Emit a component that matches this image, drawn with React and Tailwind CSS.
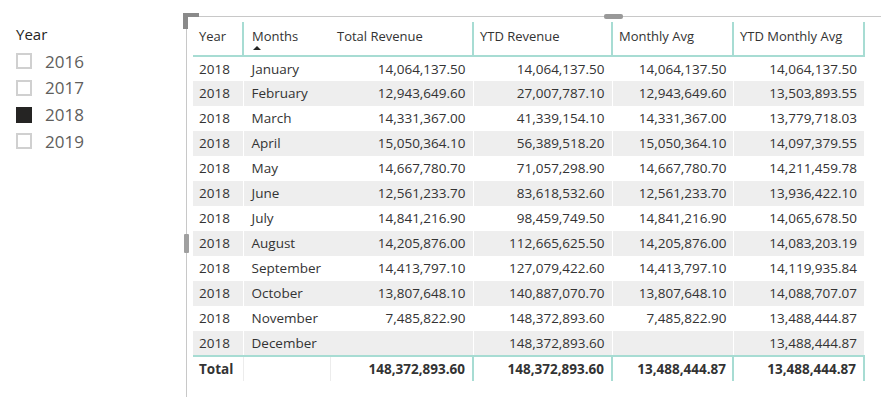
import React from "react";

const rows = [
  ["January", "14,064,137.50", "14,064,137.50", "14,064,137.50", "14,064,137.50"],
  ["February", "12,943,649.60", "27,007,787.10", "12,943,649.60", "13,503,893.55"],
  ["March", "14,331,367.00", "41,339,154.10", "14,331,367.00", "13,779,718.03"],
  ["April", "15,050,364.10", "56,389,518.20", "15,050,364.10", "14,097,379.55"],
  ["May", "14,667,780.70", "71,057,298.90", "14,667,780.70", "14,211,459.78"],
  ["June", "12,561,233.70", "83,618,532.60", "12,561,233.70", "13,936,422.10"],
  ["July", "14,841,216.90", "98,459,749.50", "14,841,216.90", "14,065,678.50"],
  ["August", "14,205,876.00", "112,665,625.50", "14,205,876.00", "14,083,203.19"],
  ["September", "14,413,797.10", "127,079,422.60", "14,413,797.10", "14,119,935.84"],
  ["October", "13,807,648.10", "140,887,070.70", "13,807,648.10", "14,088,707.07"],
  ["November", "7,485,822.90", "148,372,893.60", "7,485,822.90", "13,488,444.87"],
  ["December", "", "148,372,893.60", "", "13,488,444.87"],
];

const years = [
  { year: "2016", checked: false },
  { year: "2017", checked: false },
  { year: "2018", checked: true },
  { year: "2019", checked: false },
];

function Slicer() {
  return (
    <div className="w-[186px] shrink-0 pl-4 pt-[24px]">
      <div className="text-[15px] leading-[20px] text-[#252423]">Year</div>
      <div className="mt-[4px] flex flex-col">
        {years.map((y) => (
          <div key={y.year} className="flex h-[26.7px] items-center gap-[13px]">
            <span
              className={`h-4 w-4 border-2 ${
                y.checked ? "border-[#252423] bg-[#252423]" : "border-[#d0d0d0] bg-white"
              }`}
            />
            <span className="text-[17px] text-[#605e5c]">{y.year}</span>
          </div>
        ))}
      </div>
    </div>
  );
}

function Table() {
  const teal = "border-[#a7dcd3]";
  return (
    <table className="table-fixed border-collapse text-[#333333]">
      <colgroup>
        <col className="w-[50px]" />
        <col className="w-[87px]" />
        <col className="w-[143px]" />
        <col className="w-[139px]" />
        <col className="w-[121px]" />
        <col className="w-[131px]" />
      </colgroup>
      <thead>
        <tr className={`h-[34px] border-b-2 ${teal} text-[13px]`}>
          <th className={`border-r-2 ${teal} px-[6px] pb-[4px] text-left font-normal`}>Year</th>
          <th className="relative px-[8px] pb-[4px] text-left font-normal">
            Months
            <span className="absolute left-[9px] top-[24px] h-0 w-0 border-x-[4px] border-b-[4px] border-x-transparent border-b-[#252423]" />
          </th>
          <th className={`border-r-2 ${teal} px-[7px] pb-[4px] text-left font-normal`}>Total Revenue</th>
          <th className={`border-r-2 ${teal} px-[6px] pb-[4px] text-left font-normal`}>YTD Revenue</th>
          <th className={`border-r-2 ${teal} px-[6px] pb-[4px] text-left font-normal`}>Monthly Avg</th>
          <th className={`border-r-2 ${teal} px-[6px] pb-[4px] text-left font-normal`}>YTD Monthly Avg</th>
        </tr>
      </thead>
      <tbody className="text-[13.5px]">
        {rows.map((r, i) => (
          <tr key={r[0]} className={`h-[25px] ${i % 2 === 1 ? "bg-[#eeeeee]" : "bg-white"}`}>
            <td className="border-r border-white px-[6px]">2018</td>
            <td className="px-[8px]">{r[0]}</td>
            <td className="border-r border-white px-[7px] text-right">{r[1]}</td>
            <td className="border-r border-white px-[7px] text-right">{r[2]}</td>
            <td className="border-r border-white px-[6px] text-right">{r[3]}</td>
            <td className="px-[7px] text-right">{r[4]}</td>
          </tr>
        ))}
        <tr className={`h-[25px] border-t-2 ${teal} font-bold`}>
          <td className="border-r border-[#ececec] px-[6px]">Total</td>
          <td className="border-r border-[#ececec]" />
          <td className={`border-r-2 ${teal} px-[7px] text-right`}>148,372,893.60</td>
          <td className={`border-r-2 ${teal} px-[7px] text-right`}>148,372,893.60</td>
          <td className={`border-r-2 ${teal} px-[6px] text-right`}>13,488,444.87</td>
          <td className={`border-r-2 ${teal} px-[7px] text-right`}>13,488,444.87</td>
        </tr>
      </tbody>
    </table>
  );
}

export default function App() {
  return (
    <div className="flex h-[397px] w-[881px] overflow-hidden bg-white font-['Open_Sans',sans-serif]">
      <Slicer />
      <div className="relative mt-4 flex-1 border-l border-t border-[#c8c8c8] pl-[6px] pt-[5px]">
        <span className="absolute -left-[4px] -top-[4px] h-[4px] w-[16px] bg-[#8a8a8a]" />
        <span className="absolute -left-[4px] -top-[4px] h-[16px] w-[5px] bg-[#8a8a8a]" />
        <span className="absolute left-[417px] -top-[3px] h-[5px] w-[19px] rounded-[2px] bg-[#999999]" />
        <span className="absolute -left-[3px] top-[217px] h-[19px] w-[5px] rounded-[1px] bg-[#a0a0a0]" />
        <Table />
      </div>
    </div>
  );
}
